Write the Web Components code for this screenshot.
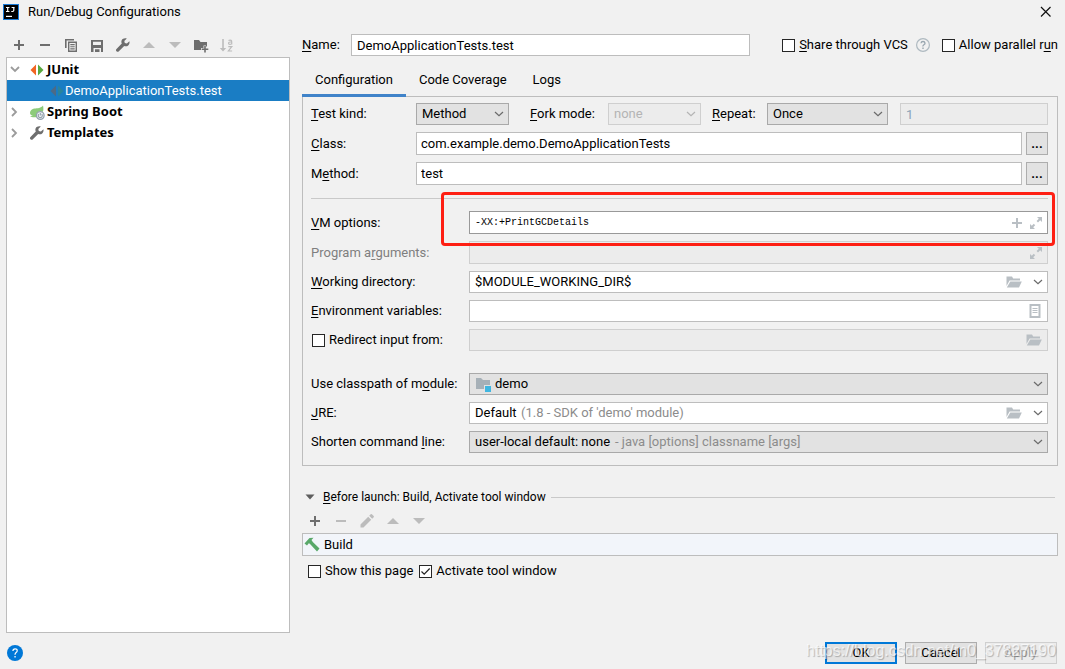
<!DOCTYPE html>
<html lang="en">
<head>
<meta charset="utf-8">
<title>Run/Debug Configurations</title>
<style>
  html, body { margin: 0; height: 100%; }
  body {
    background: #f1f1f1;
    color: #000;
    font: 13px/16px Roboto, "Noto Sans", sans-serif;
    --line: #bdbdbd;
    --line-off: #cfcfcf;
    --line-combo: #a9a9a9;
    --fill-combo: #e2e2e2;
    --fill-off: #ececec;
    --icon: #6e6e6e;
    --muted: #8c8c8c;
  }
</style>
</head>
<body>
<run-dialog></run-dialog>

<script>
const ICONS = {
  logo: '<rect width="16" height="16" fill="#1a7ad6"/><rect x="1" y="1" width="14" height="14" fill="#000"/><path d="M3 3.5h3.4M4.7 3.5v4M3 7.5h3.4M8.6 3.5h3M10.8 3.5v2.8q0 1.2-1.2 1.2H8.3" stroke="#fff" stroke-width="1.2" fill="none"/><path d="M3 12.4h6" stroke="#fff" stroke-width="1.2"/>',
  close: '<path d="M3 3l9.5 9.5M12.5 3L3 12.5" stroke="#111" stroke-width="1.2"/>',
  add: '<path d="M7 3h2v4h4v2H9v4H7V9H3V7h4z" fill="currentColor"/>',
  remove: '<path d="M3 7h10v2H3z" fill="currentColor"/>',
  copy: '<path d="M2 2h9v1.6H3.6V11H2z" fill="currentColor"/><path fill-rule="evenodd" d="M5 4.5h9V15H5zM6.4 6v7.5h6.2V6zM7.3 7.1h4.4v1.1H7.3zM7.3 9.2h4.4v1.1H7.3zM7.3 11.3h4.4v1.1H7.3z" fill="currentColor"/>',
  save: '<path fill-rule="evenodd" d="M2 3h12v12h-2v-4H4.5v4H2zM4 4.8V8h8V4.8zM6 12.3h4.5V15H6z" fill="currentColor"/>',
  wrench: '<path d="M14.4 4.3l-2.5 2.3-2.1-.7-.5-2 2.500-2.300C9.900.900 7.600 1.500 6.700 3.300 6.200 4.400 6.300 5.600 6.800 6.600L1.500 11.900c-.7.7-.7 1.700 0 2.400s1.700.7 2.400 0L9.200 9c1.300.6 2.900.4 4-.6 1.200-1.100 1.600-2.700 1.200-4.100z" fill="currentColor"/>',
  up: '<path d="M8 5l6 6H2z" fill="currentColor"/>',
  down: '<path d="M2 5h12l-6 6z" fill="currentColor"/>',
  folderadd: '<path d="M1 3h5l1.500 2H14v4.500h-1V8.500h-2.500V11H8v2H1z" fill="currentColor"/><path d="M11.200 9h1.600v2.500h2.500v1.600h-2.500v2.500h-1.600v-2.500H8.700v-1.600h2.500z" fill="currentColor"/>',
  sort: '<path d="M3.200 2h1.600v9h2.400L4 14.600.8 11h2.400z" fill="currentColor"/><path d="M9.500 3.600q1.400-.8 2.600-.2.600.3.600 1.400v2.600M12.600 5h-1.600q-1.500.1-1.500 1.200t1.500 1.100 1.700-1M9.300 9.700h3.500L9.400 14h3.700" fill="none" stroke="currentColor" stroke-width="1.200"/>',
  junit: '<path d="M7 2.500v11L1.500 8z" fill="#f26522"/><path d="M9 2.500v11L14.500 8z" fill="#59a93f"/>',
  junitdim: '<path d="M7 2.500v11L1.500 8z" fill="#4d6a86"/><path d="M9 2.500v11L14.500 8z" fill="#2a849c"/>',
  spring: '<path d="M14 1.500c.5 2.500.7 5-.3 6.500-1.300-1-3.600-1-5 .5-1.300 1.400-1.200 3-.6 4.500-2.700.6-5.600.3-7.100-.5 1-.2 2.200-.4 3-.9-1-.1-2.300-.2-2.800-1.600C.6 7.400 2.300 5 5.500 4.600c3-.4 6.500-.4 8.500-3.100z" fill="#8ccb7a"/><circle cx="11.300" cy="11.500" r="3.800" fill="#eef1f3" stroke="#93a1ac" stroke-width="1.300"/><path d="M11.300 9v2.400M9.900 10.200a2 2 0 1 0 2.800 0" fill="none" stroke="#93a1ac" stroke-width="1.100"/>',
  expanded: '<path d="M4 5l4 4 4-4" fill="none" stroke="#9b9b9b" stroke-width="1.800"/>',
  collapsed: '<path d="M5 4l4 4-4 4" fill="none" stroke="#9b9b9b" stroke-width="1.800"/>',
  chevron: '<path d="M4 6l4 3.700L12 6" fill="none" stroke="currentColor" stroke-width="1.200"/>',
  expand: '<path d="M9 2h5v5l-1.800-1.800-2.200 2.200-1.400-1.400 2.200-2.200zM2 9v5h5l-1.800-1.800L7.200 10.200 5.800 8.800 3.800 10.800z" fill="currentColor"/>',
  folder: '<path d="M.5 2.500h5.500l1.200 2H14V6.500H3.600L.5 12z" fill="currentColor"/><path d="M4.300 7.500H15.800L13 13.500H.8z" fill="currentColor"/>',
  list: '<path fill-rule="evenodd" d="M1.500 1h11v14h-11zM3.500 3v10h7V3zM4.500 5h5v1h-5zM4.500 7h5v1h-5zM4.500 9h5v1h-5z" fill="currentColor"/>',
  module: '<path d="M1 2h5l2 2h7v5H9v4H1z" fill="#a6b0b7"/><path d="M10 10h6v6h-6z" fill="#40b6e0"/>',
  triangle: '<path d="M3.500 5.500h9L8 10.500z" fill="#5e5e5e"/>',
  pencil: '<path d="M1.500 14.500v-3l7.700-7.700 3 3-7.700 7.700zM10.200 2.800l1.500-1.500q.6-.5 1.200 0l1.800 1.800q.5.600 0 1.200l-1.500 1.500z" fill="currentColor"/>',
  hammer: '<path d="M.5 6.500L5.500 1l4-.3L7.500 3l1.300 1.900L15.500 11.500 13 14.500 5.800 6.700 4.800 6.300 3 8.500z" fill="#59a869"/>',
  hint: '<circle cx="8" cy="8" r="6.400" fill="none" stroke="#aeb9c0" stroke-width="1.200"/><path d="M6 6.300q.2-1.800 2-1.800t2 1.700q0 .9-1.100 1.600T8 9.500" fill="none" stroke="#9aa7b0" stroke-width="1.300"/><path d="M7.300 10.500h1.400v1.400H7.300z" fill="#9aa7b0"/>',
  help: '<circle cx="8" cy="8" r="8" fill="#0078d7"/><path d="M5.900 6q.1-2.200 2.200-2.200T10.200 5.800q0 1-1.100 1.800T8 9.700" fill="none" stroke="#fff" stroke-width="1.200"/><path d="M7.400 11h1.300v1.400H7.400z" fill="#fff"/>'
};

function define(name, css, html, setup) {
  const template = document.createElement('template');
  template.innerHTML = `<style>*{box-sizing:border-box}button,input,select{font:inherit;color:inherit;margin:0}${css}</style>${html}`;
  customElements.define(name, class extends HTMLElement {
    connectedCallback() {
      if (this.shadowRoot) return;
      this.attachShadow({ mode: 'open' }).append(template.content.cloneNode(true));
      if (setup) setup(this, this.shadowRoot);
    }
  });
}

define('ui-icon',
  ':host{display:block;flex:none;width:16px;height:16px}svg{display:block;width:16px;height:16px}',
  '<svg viewBox="0 0 16 16" aria-hidden="true"></svg>',
  (el, root) => { root.querySelector('svg').innerHTML = ICONS[el.getAttribute('name')]; });

define('icon-button',
  `:host{display:block;flex:none;color:var(--icon)}
   :host([disabled]){color:#bcbcbc}
   :host([soft]){color:#b9bfc4}
   button{display:block;border:0;padding:0;background:none}`,
  '<button type="button"><ui-icon></ui-icon></button>',
  (el, root) => {
    const b = root.querySelector('button');
    b.setAttribute('aria-label', el.getAttribute('label') || el.getAttribute('name'));
    b.disabled = el.hasAttribute('disabled');
    const icon = document.createElement('ui-icon');
    icon.setAttribute('name', el.getAttribute('name'));
    b.replaceChildren(icon);
  });

define('tool-bar', ':host{display:flex;gap:10px;align-items:center}', '<slot></slot>');

define('title-bar',
  `:host{display:flex;align-items:center;gap:9px;height:23px;padding:0 11px 0 3px}
   h1{flex:1;margin:0;font:inherit}`,
  `<ui-icon name="logo"></ui-icon><h1><slot></slot></h1><icon-button name="close" label="Close"></icon-button>`);

define('tree-row',
  `:host{display:flex;align-items:center;height:21px;font-family:"Noto Sans",sans-serif;font-weight:700;color:#000}
   :host([selected]){background:#1a7dc4;color:#fff;font-family:inherit;font-weight:400;padding-left:42px}
   .twist{width:22px}
   .kind{color:var(--icon)}
   :host([selected]) .twist{display:none}
   .text{padding-left:2px;padding-bottom:2px;white-space:nowrap}
   :host([selected]) .text{padding:0}`,
  '<span class="twist"></span><span class="kind"></span><span class="text"><slot></slot></span>',
  (el, root) => {
    el.setAttribute('role', 'treeitem');
    root.querySelector('.twist').innerHTML = `<ui-icon name="${el.getAttribute('state') || 'collapsed'}"></ui-icon>`;
    root.querySelector('.kind').innerHTML = `<ui-icon name="${el.getAttribute('icon')}"></ui-icon>`;
  });

define('config-tree',
  ':host{display:block;flex:1;background:#fff;border:1px solid var(--line);padding-top:1px}',
  '<slot></slot>',
  el => el.setAttribute('role', 'tree'));

define('check-box',
  `:host{display:block;flex:none}
   label{display:flex;align-items:center;gap:4px;white-space:nowrap}
   input{appearance:none;flex:none;width:13px;height:13px;border:1px solid #262626;background:#fff}
   input:checked{background:#fff url("data:image/svg+xml,%3Csvg xmlns='http://www.w3.org/2000/svg' viewBox='0 0 11 11'%3E%3Cpath d='M1.500 5.500l2.700 2.700L9.700 2.500' fill='none' stroke='%23222' stroke-width='1.200'/%3E%3C/svg%3E")}`,
  '<label><input type="checkbox"><span><slot></slot></span></label>',
  (el, root) => { root.querySelector('input').checked = el.hasAttribute('checked'); });

define('text-row',
  `:host{display:flex;align-items:center;position:relative;min-width:0}
   .label{flex:none;width:var(--label-width)}
   :host([off]) .label{color:#7f7f7f}
   .box{flex:1;min-width:0;display:flex;align-items:center;height:var(--field-height,22px);background:#fff;border:1px solid var(--line);padding-right:3px}
   :host([strong]) .box{border-color:#999}
   :host([off]) .box,:host([empty-off]) .box{background:var(--fill-off);border-color:var(--line-off)}
   :host([empty-off]) .box{padding-right:5px}
   input{flex:1;min-width:0;width:0;height:100%;border:0;outline:0;background:none;padding:0 0 0 var(--text-inset,5px)}
   :host([mono]) input{font-family:"Liberation Mono",monospace;font-size:10px}
   .icons{display:flex;gap:3px}`,
  `<span class="label"><slot name="before"></slot><label for="field"><slot></slot></label></span>
   <div class="box"><input id="field" type="text"><span class="icons"><slot name="icons"></slot></span></div>
   <slot name="after"></slot>`,
  (el, root) => {
    const input = root.querySelector('input');
    input.value = el.getAttribute('value') || '';
    input.disabled = el.hasAttribute('off') || el.hasAttribute('empty-off');
    if (el.hasAttribute('empty-off')) input.setAttribute('aria-label', 'Redirect input file');
  });

define('select-row',
  `:host{display:flex;align-items:center;min-width:0}
   .label{flex:none;width:var(--label-width)}
   .box{flex:1;min-width:0;display:flex;align-items:center;height:22px;background:var(--fill-combo);border:1px solid var(--line-combo);padding:0 1px 0 5px;white-space:nowrap;color:#000}
   select{appearance:none;flex:none;border:0;outline:0;background:none;padding:0;height:20px;opacity:1}
   .hint{flex:1;color:var(--muted);padding-left:4px;overflow:hidden}
   .chev{color:#6a6a6a}
   :host([white]) .box{background:#fff;border-color:var(--line)}
   :host([off]) .box{background:var(--fill-off);border-color:var(--line-off);color:#b4b4b4}
   :host([off]) .chev{color:#b4b4b4}
   .icons{display:flex;padding-right:8px}`,
  `<label class="label" for="field"><slot></slot></label>
   <div class="box"><slot name="lead"></slot><select id="field"><option></option></select><span class="hint"></span><span class="icons"><slot name="icons"></slot></span><ui-icon class="chev" name="chevron"></ui-icon></div>`,
  (el, root) => {
    root.querySelector('option').textContent = el.getAttribute('value');
    root.querySelector('.hint').textContent = el.getAttribute('hint') || '';
    root.querySelector('select').disabled = el.hasAttribute('off');
    if (!el.querySelector('[slot=icons]')) root.querySelector('.icons').remove();
  });

define('push-button',
  `:host{display:block;flex:none;width:72px}
   :host([small]){width:22px;margin-left:4px}
   button{display:block;width:100%;height:22px;padding:0;line-height:20px;background:#e2e2e2;border:1px solid #adadad}
   :host([small]) button{height:23px;line-height:16px;font-weight:700}
   :host([primary]) button{border:2px solid #0078d7;line-height:18px}
   button:disabled{background:#ececec;border-color:#cfcfcf;color:#a5a5a5}`,
  '<button type="button"><slot></slot></button>',
  (el, root) => { root.querySelector('button').disabled = el.hasAttribute('disabled'); });

define('tab-strip',
  `:host{display:flex;height:33px}
   button{border:0;background:none;padding:0 13px;white-space:nowrap}
   button[aria-selected=true]{position:relative}
   button[aria-selected=true]::after{content:"";position:absolute;left:0;right:0;bottom:-1px;height:3px;background:#4083c9}`,
  `<button type="button" role="tab" aria-selected="true">Configuration</button><button type="button" role="tab">Code Coverage</button><button type="button" role="tab">Logs</button>`,
  el => el.setAttribute('role', 'tablist'));

define('config-panel',
  `:host{display:flex;flex-direction:column;border:1px solid var(--line);padding:6px 9px 12px 8px;--label-width:105px}
   u{text-underline-offset:2px}
   .kinds{display:flex;align-items:center}
   .kinds>*{flex:none}
   .kind{width:198px}
   .fork{width:171px;margin-left:21px;--label-width:78px}
   .repeat{width:176px;margin-left:11px;--label-width:55px}
   .kinds .count{flex:1;margin-left:12px;--label-width:0px;color:#8ba3b8}
   .tall{display:flex;flex-direction:column;gap:7px;--field-height:23px}
   hr{width:100%;height:1px;border:0;margin:13px 0 12px;background:#c9c9c9}
   .target{margin-top:7px;--text-inset:4px}
   .wide{--label-width:158px}
   .group{display:flex;flex-direction:column;gap:7px}
   .group check-box{margin-left:1px}
   .group ui-icon{margin-right:4px}
   .next{margin-top:7px}
   .last{margin-top:22px}
   .mark{position:absolute;inset:-19px -7px -12px 130px;border:3px solid #fe1f13;border-radius:4px;pointer-events:none;z-index:1}`,
  `<div class="kinds">
     <select-row class="kind" value="Method"><u>T</u>est kind:</select-row>
     <select-row class="fork" value="none" off><u>F</u>ork mode:</select-row>
     <select-row class="repeat" value="Once"><u>R</u>epeat:</select-row>
     <text-row class="count" value="1" off></text-row>
   </div>
   <div class="tall target">
     <text-row value="com.example.demo.DemoApplicationTests"><u>C</u>lass:<push-button small slot="after">...</push-button></text-row>
     <text-row value="test">M<u>e</u>thod:<push-button small slot="after">...</push-button></text-row>
   </div>
   <hr>
   <div class="tall wide">
     <text-row value="-XX:+PrintGCDetails" mono strong><u>V</u>M options:
       <icon-button soft slot="icons" name="add" label="Insert macro"></icon-button><icon-button soft slot="icons" name="expand" label="Expand"></icon-button>
       <span slot="after" class="mark"></span></text-row>
     <text-row off>Program a<u>r</u>guments:<icon-button soft slot="icons" name="expand" label="Expand"></icon-button></text-row>
   </div>
   <div class="group wide next">
     <select-row white value="$MODULE_WORKING_DIR$"><u>W</u>orking directory:<icon-button soft slot="icons" name="folder" label="Browse"></icon-button></select-row>
     <text-row><u>E</u>nvironment variables:<icon-button soft slot="icons" name="list" label="Edit variables"></icon-button></text-row>
     <text-row empty-off><check-box slot="before">Redirect input from:</check-box><icon-button soft slot="icons" name="folder" label="Browse"></icon-button></text-row>
   </div>
   <div class="group wide last">
     <select-row value="demo"><ui-icon slot="lead" name="module"></ui-icon>Use classpath of m<u>o</u>dule:</select-row>
     <select-row white value="Default" hint="(1.8 - SDK of 'demo' module)"><u>J</u>RE:<icon-button soft slot="icons" name="folder" label="Browse"></icon-button></select-row>
     <select-row value="user-local default: none" hint="- java [options] classname [args]">Shorten command <u>l</u>ine:</select-row>
   </div>`);

define('before-launch',
  `:host{display:block;margin-top:23px}
   u{text-underline-offset:2px}
   .head{display:flex;align-items:center;gap:5px;font-size:12px}
   .head span{white-space:nowrap}
   .head::after{content:"";flex:1;height:1px;background:#c9c9c9;margin-right:3px}
   tool-bar{margin:8px 0 4px 5px}
   .task{display:flex;align-items:center;gap:4px;height:23px;border:1px solid var(--line);background:#f2f5fa;padding-left:1px}
   .checks{display:flex;gap:6px;margin:7px 0 0 6px}`,
  `<div class="head"><ui-icon name="triangle"></ui-icon><span><u>B</u>efore launch: Build, Activate tool window</span></div>
   <tool-bar>
     <icon-button name="add" label="Add task"></icon-button>
     <icon-button name="remove" disabled></icon-button>
     <icon-button name="pencil" disabled></icon-button>
     <icon-button name="up" disabled></icon-button>
     <icon-button name="down" disabled></icon-button>
   </tool-bar>
   <div class="task"><ui-icon name="hammer"></ui-icon><span>Build</span></div>
   <div class="checks"><check-box>Show this page</check-box><check-box checked>Activate tool window</check-box></div>`);

define('run-dialog',
  `:host{display:flex;flex-direction:column;min-height:100vh;position:relative;overflow:hidden}
   u{text-underline-offset:2px}
   main{flex:1;display:grid;grid-template-columns:minmax(200px,284px) minmax(0,1fr);gap:12px;padding:11px 7px 0 6px}
   aside{display:flex;flex-direction:column}
   aside tool-bar{height:23px;padding:0 0 1px 5px}
   .name{display:flex;align-items:center;height:22px}
   .name text-row{flex:1;--label-width:49px;margin-right:32px}
   .name ui-icon{margin:0 11px 0 7px}
   tab-strip{margin-top:7px}
   footer{display:flex;align-items:center;gap:8px;padding:9px 8px 5px 7px}
   footer ui-icon{margin-right:auto}
   .stamp{position:absolute;right:9px;bottom:8px;font:16px/20px "Liberation Sans",sans-serif;color:rgba(255,255,255,.7);text-shadow:1px 1px 1px rgba(0,0,0,.25);pointer-events:none}`,
  `<title-bar>Run/Debug Configurations</title-bar>
   <main>
     <aside>
       <tool-bar>
         <icon-button name="add"></icon-button><icon-button name="remove"></icon-button><icon-button name="copy"></icon-button>
         <icon-button name="save"></icon-button><icon-button name="wrench"></icon-button><icon-button name="up" disabled></icon-button>
         <icon-button name="down" disabled></icon-button><icon-button name="folderadd"></icon-button><icon-button name="sort" disabled></icon-button>
       </tool-bar>
       <config-tree>
         <tree-row state="expanded" icon="junit">JUnit</tree-row>
         <tree-row selected icon="junitdim">DemoApplicationTests.test</tree-row>
         <tree-row icon="spring">Spring Boot</tree-row>
         <tree-row icon="wrench">Templates</tree-row>
       </config-tree>
     </aside>
     <section>
       <div class="name">
         <text-row value="DemoApplicationTests.test"><u>N</u>ame:</text-row>
         <check-box><u>S</u>hare through VCS</check-box>
         <ui-icon name="hint"></ui-icon>
         <check-box>Allow parallel r<u>u</u>n</check-box>
       </div>
       <tab-strip></tab-strip>
       <config-panel></config-panel>
       <before-launch></before-launch>
     </section>
   </main>
   <footer>
     <ui-icon name="help"></ui-icon>
     <push-button primary>OK</push-button><push-button>Cancel</push-button><push-button disabled>Apply</push-button>
   </footer>
   <div class="stamp">https://blog.csdn.net/m0_37827190</div>`);
</script>
</body>
</html>
